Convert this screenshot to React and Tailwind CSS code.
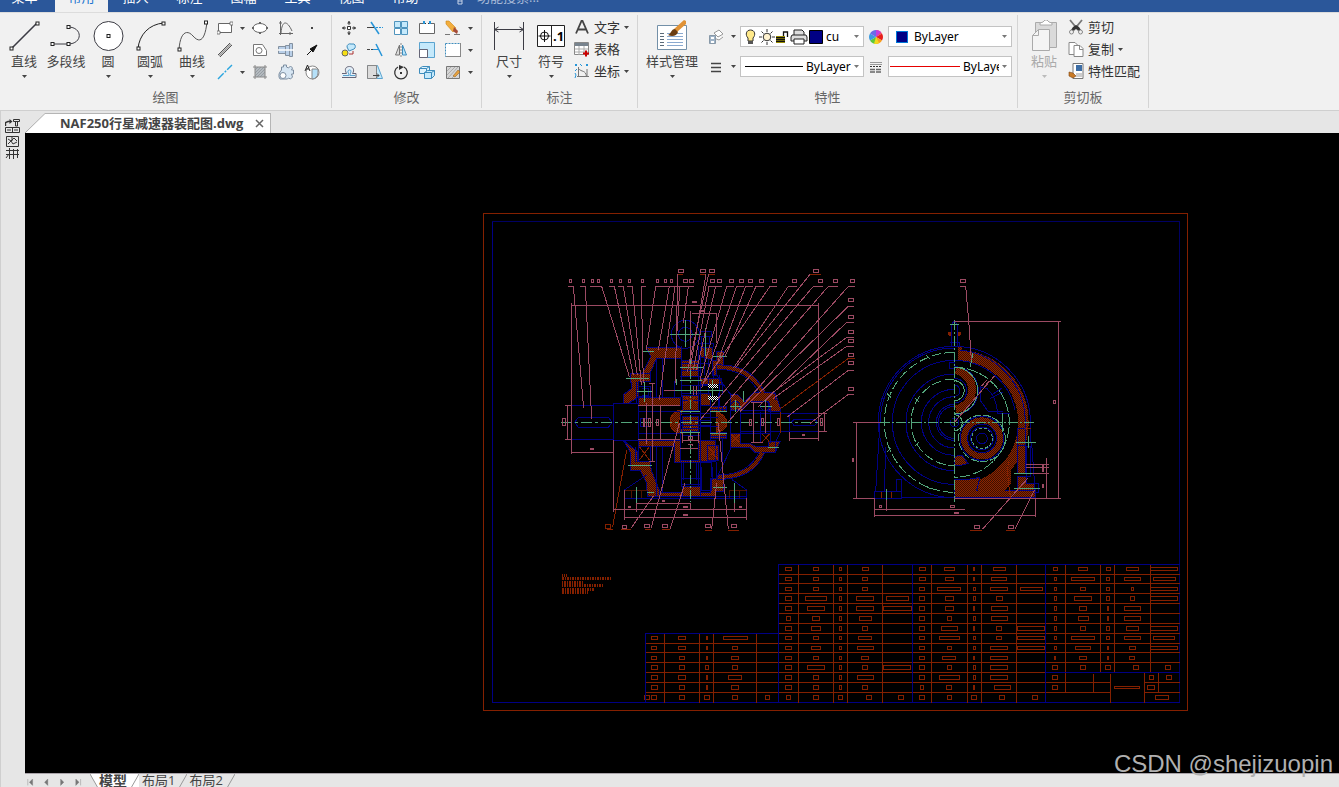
import { useState } from "react";

const BLUE = "#000084";
const BROWN = "#842000";
const PINK = "#9c4a63";
const GREEN = "#52a57b";

function Caret({ className = "text-[#444]" }) {
  return (
    <svg width="5" height="3" viewBox="0 0 5 3" className={`shrink-0 ${className}`}>
      <path d="M0 0h5L2.5 3z" fill="currentColor" />
    </svg>
  );
}

function Node({ x, y }) {
  return <rect x={x - 1.5} y={y - 1.5} width="3" height="3" fill="#fff" stroke="#222" />;
}

const bigIcons = {
  line: (
    <>
      <path d="M3 29L29 3" stroke="#3c3c44" strokeWidth="1.6" />
      <Node x={3.5} y={28.5} />
      <Node x={29.5} y={3.5} />
    </>
  ),
  polyline: (
    <>
      <path d="M2 24H18C33 24 33 7 18 7" stroke="#3c3c44" />
      <Node x={2.5} y={24} />
      <Node x={18.5} y={24} />
      <Node x={18.5} y={7} />
    </>
  ),
  circle: (
    <>
      <circle cx="16.5" cy="16" r="14.5" fill="#fff" stroke="#3c3c44" />
      <Node x={16.5} y={16} />
    </>
  ),
  arc: (
    <>
      <path d="M4 29C5 15 15 4 30 3" stroke="#222" />
      <Node x={4.5} y={28.5} />
      <Node x={29.5} y={3.5} />
    </>
  ),
  curve: (
    <>
      <path d="M3 30C4 12 11 9 17 16C24 24 29 20 31 2" stroke="#555" />
      <Node x={3.5} y={29.5} />
      <Node x={30} y={2.5} />
    </>
  ),
  size: (
    <path
      d="M1.5 2v28M30.5 2v28M2 9.5h28M5.5 7l-4 2.500 4 2.500M26.500 7l4 2.500-4 2.500"
      stroke="#3c3c44"
    />
  ),
  symbol: (
    <>
      <path d="M2.500 5.500h27v21h-27zM16.500 5.500v21" fill="#fff" stroke="#222" />
      <circle cx="9.500" cy="16" r="4" stroke="#111" />
      <path d="M3.500 16h12M9.500 10v12" stroke="#111" />
      <text x="18" y="21" fontSize="13" fontWeight="700" fill="#000" stroke="none">
        .1
      </text>
    </>
  ),
  style: (
    <>
      <path d="M1.500 5.500h29v24h-29z" fill="#fff" stroke="#7390a8" />
      <path d="M4 13.500h4M4 16.500h4M4 19.500h4M4 22.500h4M4 25.500h4" stroke="#5a6a78" />
      <path d="M11 13.500h16M11 16.500h16M11 19.500h16M11 22.500h16M11 25.500h16" stroke="#8aa9cf" />
      <path d="M18 9L28 0l2 1v3l-9 8z" fill="#e09236" />
      <path d="M12 15c3-1 3-6 7-6l3 3c-1 4-6 5-10 3z" fill="#6b3d12" />
    </>
  ),
  paste: (
    <>
      <path d="M7.500 2.500h21v25h-21z" fill="#dadada" stroke="#aaa" />
      <path d="M12 5V3l3-1 2-2h2l2 2 3 1v2z" fill="#fff" stroke="#aaa" />
      <path d="M4.500 15.500l6-6h11v21h-17zM10.500 9.500v6h-6" fill="#f4f4f4" stroke="#aaa" />
    </>
  ),
};

function BigButton({ icon, label, caret = true, disabled = false, wide = false }) {
  return (
    <button
      type="button"
      disabled={disabled}
      className={`flex flex-col items-center pt-[5px] ${wide ? "w-14" : "w-[42px]"} ${
        disabled ? "text-[#aaa]" : "text-[#444]"
      }`}
    >
      <svg width="32" height="32" viewBox="0 0 32 32" fill="none" aria-hidden="true">
        {bigIcons[icon]}
      </svg>
      <span className="text-[13px] leading-[18px] whitespace-nowrap">{label}</span>
      {caret && (
        <span className="pt-[5px] leading-none">
          <Caret className={`block ${disabled ? "text-[#bbb]" : "text-[#444]"}`} />
        </span>
      )}
    </button>
  );
}

const smallIcons = {
  rect: (
    <>
      <path d="M1.500 3.500h13v9h-13z" fill="#fff" stroke="#666" />
      <path d="M0 11h3v3H0zM13 2h3v3h-3z" fill="#fff" stroke="#666" strokeWidth=".8" />
    </>
  ),
  ellipse: (
    <>
      <ellipse cx="8" cy="8" rx="7" ry="4.500" fill="#fff" stroke="#666" />
      <path d="M7 2h2v2H7zM7 12h2v2H7zM0 7h2v2H0zM14 7h2v2h-2z" fill="#666" />
    </>
  ),
  graph: <path d="M2.500 1v14M1 13.500h14M1 3h3M12 12v3M3 13C4 0 9 0 14 11" stroke="#666" />,
  point: <path d="M7 7h2v2H7z" fill="#444" />,
  parallel: (
    <>
      <path d="M1 13L13 1M3 15L15 3" stroke="#555" />
      <path d="M2 14L14 2" stroke="#999" strokeWidth="1.500" />
    </>
  ),
  region: (
    <>
      <path d="M1.500 2.500h9l4 6v5h-13z" fill="#fff" stroke="#777" />
      <circle cx="7" cy="8.500" r="3" stroke="#777" />
    </>
  ),
  shaft: (
    <>
      <path d="M.5 4.500h7v7h-7zM7.500 3.500h4v10h-4zM11.500 1.500h3v13h-3z" fill="#b9cfe8" stroke="#8391a0" />
      <path d="M0 8h16" stroke="#fff" strokeWidth="1.500" />
    </>
  ),
  arrow: (
    <>
      <path d="M3 13L8 8" stroke="#111" />
      <path d="M13 3L6 7l3 3z" fill="#111" stroke="#111" />
    </>
  ),
  center: <path d="M1 15L15 1" stroke="#2aa5df" strokeWidth="1.400" strokeDasharray="8 1.500 2 1.500" />,
  hatch: (
    <>
      <path d="M3 3h10v10H3z" fill="#b4babf" />
      <path d="M3 6l3-3M3 9l6-6M3 12l9-9M5 13l8-8M8 13l5-5" stroke="#8a9196" strokeWidth=".7" />
      <path d="M1 3h14M1 13h14M3 1v14M13 1v14" stroke="#888" />
    </>
  ),
  gear: (
    <>
      <path
        d="M3.500 6V3h2V1h3v2l2 1 2-2 2 2-1 2h2v4l-2 0 1 3-2 2-2-1-1 1H5l-3 0-1-2v-3l1-2z"
        fill="#d7e6f3"
        stroke="#7d8ea1"
      />
      <circle cx="5" cy="11.500" r="3" fill="#fff" stroke="#7d8ea1" />
    </>
  ),
  detail: (
    <>
      <circle cx="8.500" cy="8.500" r="6.500" fill="#fff" stroke="#888" />
      <path d="M8 5h6v4a6 6 0 0 1-6 6z" fill="#b5e0f8" stroke="#888" />
      <path d="M1 7L3.500 1 6 7M2 5h3" stroke="#222" />
    </>
  ),
  move: (
    <>
      <path d="M6.500 6.500h3v3h-3z" fill="#fff" stroke="#333" />
      <path d="M8 1v4M8 11v4M1 8h4M11 8h4" stroke="#444" />
      <path d="M6 3.500L8 1l2 2.500zM6 12.500L8 15l2-2.500zM3.500 6L1 8l2.500 2zM12.500 6L15 8l-2.500 2z" fill="#444" />
    </>
  ),
  trim: (
    <>
      <path d="M4 2l8 12" stroke="#2795d8" strokeWidth="1.500" />
      <path d="M0 7.500h7" stroke="#444" />
      <path d="M9 7.500h7" stroke="#2795d8" strokeDasharray="2 1" />
    </>
  ),
  array: (
    <>
      <path d="M1.500 1.500h6v6h-6zM8.500 1.500h6v6h-6zM8.500 8.500h6v6h-6z" fill="#c5e9fb" stroke="#4f94bd" />
      <path d="M1.500 8.500h6v6h-6z" fill="#fff" stroke="#4f94bd" />
    </>
  ),
  breakIt: (
    <>
      <path d="M4 3.500H.5v10h15v-10H12" fill="#fff" stroke="#666" />
      <path d="M4 2.500h2M10 2.500h2" stroke="#2795d8" strokeWidth="3" />
      <path d="M6 3.500h1M9 3.500h1" stroke="#333" />
    </>
  ),
  erase: (
    <>
      <path d="M1 1l3 0 7 7-3 4-7-8z" fill="#f3ae3d" stroke="#c98419" strokeWidth=".6" />
      <path d="M9 7l4 4-1 3-4-3z" fill="#a54c38" />
      <path d="M0 14.500h5M9 14.500h6" stroke="#777" />
    </>
  ),
  copy: (
    <>
      <circle cx="4" cy="11" r="3" fill="#f6df13" stroke="#666" />
      <path d="M6 5a3 3 0 0 1 4-3l3 0a3 3 0 0 1 0 5l-5 2z" fill="#c5e9fb" stroke="#3e8dbd" />
      <path d="M8 12h4V9" stroke="#a33" />
    </>
  ),
  extend: (
    <>
      <path d="M9 2l6 12" stroke="#2795d8" strokeWidth="1.500" />
      <path d="M0 7.500h6" stroke="#444" strokeDasharray="3 1" />
      <path d="M6 7.500h5" stroke="#2795d8" />
    </>
  ),
  mirror: (
    <>
      <path d="M6.500 3v10h-4z" fill="#ddd" stroke="#777" />
      <path d="M9.500 3v10h4z" fill="#b9e3fa" stroke="#3e8dbd" />
      <path d="M8 1v14" stroke="#888" strokeDasharray="2 1" />
    </>
  ),
  scale: (
    <>
      <path d="M.5 .5h15v15H.5z" fill="#c5e9fb" stroke="#5aa3cf" />
      <path d="M.5 7.500h8v8h-8z" fill="#fff" stroke="#667" />
    </>
  ),
  stretch: (
    <>
      <path d="M.5 1.500h15v13H.5z" fill="#fff" stroke="#3e8dbd" strokeDasharray="2 1" />
      <path d="M15.500 1v14M1 14.500h14" stroke="#888" />
    </>
  ),
  offset: (
    <>
      <path d="M1 9.500h4.500C3 5 5 2.500 8.500 2.500S14 6 11.500 9.500H15V13.500H1" fill="#e4eff8" stroke="#667" />
      <path d="M2 11.500h6c0-2-1.500-3-1-4.500s3-1.500 3 0-1 2.500-1 4.500h5" stroke="#5aa3cf" />
    </>
  ),
  taper: (
    <>
      <path d="M.5 1.500h10l5 13H.5z" fill="#c5e9fb" stroke="#5aa3cf" />
      <path d="M.5 1.500h9v13h-9z" fill="#dcdcdc" stroke="#888" />
      <path d="M6 11.500h6M10 9.500l2 2-2 2" stroke="#444" />
    </>
  ),
  rotate: (
    <>
      <path d="M5 3a6.300 6.300 0 1 0 6 0" stroke="#333" strokeWidth="1.300" />
      <path d="M6 1l5 2-5 3z" fill="#333" />
      <path d="M7 8h2v2H7z" fill="#333" />
    </>
  ),
  blocks: (
    <>
      <path d="M.5 4.500l3-2h7v4l-3 3h-7z" fill="#dff2fc" stroke="#3e8dbd" />
      <path d="M.5 4.500h7l3-2M7.500 4.500v5" stroke="#3e8dbd" />
      <path d="M5.500 8.500l3-2h7v5l-3 3h-7z" fill="#c5e9fb" stroke="#3e8dbd" />
      <path d="M5.500 8.500h7v6M12.500 8.500l3-2" stroke="#3e8dbd" />
    </>
  ),
  hatchEdit: (
    <>
      <path d="M1.500 2.500h13v12h-13z" fill="#d6d6d6" stroke="#777" />
      <path d="M2 7l4-4M2 11l8-8M3 14L13 3M7 14l7-7" stroke="#999" strokeWidth=".7" />
      <path d="M8 12l5-6 2 2-5 5z" fill="#e5a03e" stroke="#8b5a1d" strokeWidth=".5" />
    </>
  ),
  letter: <path d="M2 14.500L7.500 2h1L14 14.500M4 10.500h8" stroke="#444" strokeWidth="1.800" />,
  table: (
    <>
      <path d="M.5 1.500h14v12H.5z" fill="#fff" stroke="#888" />
      <path d="M1 2h13v3H1z" fill="#77838e" />
      <path d="M1 8h13M1 11h13M5 5v9M10 5v9" stroke="#aaa" />
      <path d="M9 12.500h6M12 9.500v6" stroke="#c00" strokeWidth="2" />
    </>
  ),
  coord: (
    <>
      <path d="M4.500 4v10M3 13.500h12M4.500 5.500c3 4 7 1 8 8M13 6v8" stroke="#777" />
      <path d="M1 1l2 2M3 1L1 3M6 1l2 2M12 1l2 2M14 1l-2 2M1 10l1 2M2 12l-1 3M3 6L1 8" stroke="#2795d8" />
    </>
  ),
  layers: (
    <>
      <path d="M6 4l5-3 4 4-5 3zM7 7l-1 2 5 2 4-3" fill="#fff" stroke="#999" />
      <path d="M1.500 6.500h6v8h-6z" fill="#9fb3c7" stroke="#8899a8" />
      <path d="M3 8h3v2H3zM3 12h3v2H3z" fill="#fff" />
    </>
  ),
  lines: <path d="M3 4.500h10M3 8.500h10M3 12.500h10" stroke="#444" strokeWidth="1.300" />,
  wheel: (
    <>
      <path d="M8 8V1a7 7 0 0 1 6 3.500z" fill="#f0486b" />
      <path d="M8 8l6-3.500a7 7 0 0 1 0 7z" fill="#e8201c" />
      <path d="M8 8l6 3.500A7 7 0 0 1 8 15z" fill="#f9a01e" />
      <path d="M8 8v7a7 7 0 0 1-6-3.500z" fill="#5cc93c" />
      <path d="M8 8l-6 3.500a7 7 0 0 1 0-7z" fill="#3c9be0" />
      <path d="M8 8L2 4.500A7 7 0 0 1 8 1z" fill="#6a6be8" />
      <path d="M8 8V1a7 7 0 0 1 5 2z" fill="#c43de0" />
      <path d="M8 8l3 6a7 7 0 0 1-5 .7z" fill="#f2d91e" />
    </>
  ),
  weights: (
    <>
      <path d="M2 3.500h12M2 5.500h12" stroke="#999" />
      <path d="M2 7.500h12" stroke="#333" strokeDasharray="2 1" />
      <path d="M2 10.500h12M2 13h12" stroke="#666" strokeWidth="1.500" strokeDasharray="5 1" />
    </>
  ),
  cut: (
    <>
      <path d="M2 1l9 11M14 1L5 12" stroke="#777" strokeWidth="1.800" />
      <path d="M5 8l3-2 3 2 2 3-3 0-2-1-2 1-3 0z" fill="#333" />
      <circle cx="3.500" cy="13" r="2" stroke="#888" />
      <circle cx="12.500" cy="13" r="2" stroke="#888" />
    </>
  ),
  pages: (
    <>
      <path d="M1 1.500h6l3 3v9H1z" fill="#fff" stroke="#888" />
      <path d="M6 4.500h6l3 3v8H6z" fill="#fff" stroke="#888" />
      <path d="M11.500 4.500v4H15" stroke="#888" />
    </>
  ),
  match: (
    <>
      <path d="M5 .5h10v15H5z" fill="#fff" stroke="#777" />
      <path d="M8 2h6v6H8z" fill="#3c6da5" />
      <path d="M8 11h6M8 13h6" stroke="#999" />
      <path d="M1 9l4 1 3 3-3 2-4-2z" fill="#c87a26" stroke="#7c4310" strokeWidth=".6" />
    </>
  ),
};

function Icon({ name }) {
  return (
    <svg width="16" height="16" viewBox="0 0 16 16" fill="none" aria-hidden="true" className="shrink-0">
      {smallIcons[name]}
    </svg>
  );
}

function ToolButton({ icon, label, caret = false }) {
  return (
    <button type="button" aria-label={label} className="flex h-[22px] items-center gap-[7px] pl-1">
      <Icon name={icon} />
      {caret && <Caret />}
    </button>
  );
}

function TextButton({ icon, label, caret = false }) {
  return (
    <button type="button" className="flex h-[22px] items-center gap-1 text-[13px] text-[#333]">
      <Icon name={icon} />
      <span className="leading-5">{label}</span>
      {caret && <Caret />}
    </button>
  );
}

function Group({ title, children, className = "" }) {
  return (
    <section className="my-[2px] flex shrink-0 flex-col border-r border-[#d4d4d4]">
      <div className={`flex h-[72px] ${className}`}>{children}</div>
      <h2 className="text-center text-[13px] leading-5 text-[#666]">{title}</h2>
    </section>
  );
}

function Picker({ label, value, children, tight = false }) {
  return (
    <label
      className={`flex h-[21px] w-[124px] items-center gap-[3px] border border-[#c3c3c3] bg-white pr-1 ${
        tight ? "pl-px" : "pl-1"
      }`}
    >
      {children}
      <select
        aria-label={label}
        defaultValue={value}
        className="min-w-0 flex-1 appearance-none bg-transparent font-['Noto_Sans',sans-serif] text-[12px] leading-4 text-black outline-none"
      >
        <option>{value}</option>
      </select>
      <Caret className="text-[#777]" />
    </label>
  );
}

const drawTools = [
  ["rect", "矩形", true],
  ["ellipse", "椭圆"],
  ["graph", "公式曲线"],
  ["point", "点"],
  ["parallel", "平行线"],
  ["region", "局部放大"],
  ["shaft", "孔/轴"],
  ["arrow", "箭头"],
  ["center", "中心线", true],
  ["hatch", "剖面线"],
  ["gear", "齿形"],
  ["detail", "放大图"],
];

const modifyTools = [
  ["move", "平移"],
  ["trim", "裁剪"],
  ["array", "阵列"],
  ["breakIt", "打断"],
  ["erase", "删除", true],
  ["copy", "平移复制"],
  ["extend", "延伸"],
  ["mirror", "镜像"],
  ["scale", "缩放"],
  ["stretch", "拉伸", true],
  ["offset", "等距线"],
  ["taper", "过渡"],
  ["rotate", "旋转"],
  ["blocks", "分解"],
  ["hatchEdit", "填充编辑", true],
];

function Ribbon() {
  return (
    <div className="flex h-[99px] shrink-0 overflow-hidden border-t border-b border-t-[#dcdcdc] border-b-[#cfcfcf] bg-[#f1f1f1]">
      <Group title="绘图" className="pr-[5px] pl-[3px]">
        <BigButton icon="line" label="直线" />
        <BigButton icon="polyline" label="多段线" caret={false} />
        <BigButton icon="circle" label="圆" />
        <BigButton icon="arc" label="圆弧" />
        <BigButton icon="curve" label="曲线" />
        <div className="grid auto-rows-[22px] grid-cols-[35px_26px_26px_26px] pt-0.5">
          {drawTools.map(([icon, label, caret]) => (
            <ToolButton key={icon} icon={icon} label={label} caret={caret} />
          ))}
        </div>
      </Group>

      <Group title="修改" className="pl-[5px]">
        <div className="grid auto-rows-[22px] grid-cols-[26px_26px_26px_26px_40px] pt-0.5">
          {modifyTools.map(([icon, label, caret]) => (
            <ToolButton key={icon} icon={icon} label={label} caret={caret} />
          ))}
        </div>
      </Group>

      <Group title="标注" className="pr-2 pl-1.5">
        <BigButton icon="size" label="尺寸" />
        <BigButton icon="symbol" label="符号" />
        <div className="flex flex-col pt-px pl-0.5">
          <TextButton icon="letter" label="文字" caret />
          <TextButton icon="table" label="表格" />
          <TextButton icon="coord" label="坐标" caret />
        </div>
      </Group>

      <Group title="特性" className="pr-[5px] pl-1.5">
        <BigButton icon="style" label="样式管理" wide />
        <div className="grid auto-rows-[21px] grid-cols-[36px_124px_24px_124px] items-center gap-y-[9px] pt-[11px] pl-1">
          <ToolButton icon="layers" label="图层" caret />
          <Picker label="当前图层" value="cu">
            <svg width="78" height="16" viewBox="0 0 78 16" fill="none" className="shrink-0" aria-hidden="true">
              <path d="M3 9C0 6 1 1 5.500 1S11 6 8 9v3H3z" fill="#ffe98a" stroke="#333" />
              <path d="M3 12h5v3H3z" fill="#555" />
              <circle cx="22" cy="8" r="3.800" fill="#fff3d0" stroke="#333" />
              <path d="M22 0v3M22 13v3M14 8h3M27 8h3M16.500 2.500l2 2M25.500 11.500l2 2M16.500 13.500l2-2M25.500 4.500l2-2" stroke="#333" />
              <path d="M31 7h9v7h-9z" fill="#c9b900" />
              <path d="M31 8.500h9M31 10.500h9M31 12.500h9M38.500 7V3h4v5" stroke="#111" strokeWidth="1.300" />
              <path d="M49 6V1h8l2 2v3M47 6h14l1 2v4H46V8z" fill="#ddd" stroke="#222" />
              <path d="M49 10h10v5H49z" fill="#fff" stroke="#222" />
              <path d="M64.500 1.500h13v13h-13z" fill="#000084" stroke="#000" />
            </svg>
          </Picker>
          <span className="flex justify-center">
            <Icon name="wheel" />
          </span>
          <Picker label="颜色" value="ByLayer">
            <span className="mx-[3px] h-3 w-3 shrink-0 border border-[#0078d7] bg-[#000084]" />
          </Picker>
          <ToolButton icon="lines" label="线型" caret />
          <Picker label="线型选择" value="ByLayer">
            <span className="h-px w-[58px] shrink-0 bg-black" />
          </Picker>
          <span className="flex justify-center">
            <Icon name="weights" />
          </span>
          <Picker label="线宽选择" value="ByLayer" tight>
            <span className="h-px w-[70px] shrink-0 bg-[#e60000]" />
          </Picker>
        </div>
      </Group>

      <Group title="剪切板" className="pr-2 pl-[5px]">
        <BigButton icon="paste" label="粘贴" disabled />
        <div className="flex flex-col pt-px pl-[3px]">
          <TextButton icon="cut" label="剪切" />
          <TextButton icon="pages" label="复制" caret />
          <TextButton icon="match" label="特性匹配" />
        </div>
      </Group>
    </div>
  );
}

function MenuBar() {
  const [active, setActive] = useState("常用");
  const items = ["常用", "插入", "标注", "图幅", "工具", "视图", "帮助"];
  return (
    <nav className="flex h-3 shrink-0 items-end overflow-hidden bg-[#2b579a] text-[13px] text-white">
      <button type="button" className="h-7 w-[55px] shrink-0 pr-1.5 pb-0.5 leading-5">
        菜单
      </button>
      {items.map((item) => (
        <button
          key={item}
          type="button"
          onClick={() => setActive(item)}
          className={`mr-px h-7 w-[53px] shrink-0 pb-0.5 leading-5 ${
            item === active ? "bg-[#f1f1f1] text-[#1a73d0]" : ""
          }`}
        >
          {item}
        </button>
      ))}
      <label className="flex h-7 items-center gap-3 pb-0.5 pl-[22px]">
        <svg width="10" height="16" viewBox="0 0 10 16" fill="none" aria-hidden="true">
          <path d="M3 10C0 7 1 2 5 2s5 5 2 8v5H3zM3 12h4" stroke="#c8d4e8" />
        </svg>
        <input
          type="text"
          aria-label="功能搜索"
          placeholder="功能搜索..."
          className="w-24 bg-transparent leading-5 outline-none placeholder:text-[#a9bbd8]"
        />
      </label>
    </nav>
  );
}

const rowY = [569, 579, 589, 598, 608, 618, 628, 638, 648, 658, 667, 677, 687, 697];
const rowLines = [574, 583, 593, 603, 613, 623, 633, 643, 652, 662];

// centre of the column, first row, widths of the text boxes
const partColumns = [
  [654, 7, [7, 6, 6, 7, 7, 7, 6]],
  [682, 7, [8, 8, 6, 6, 8, 6, 6]],
  [707, 7, [2, 2, 2, 4, 2, 2, 6]],
  [735, 7, [25, 6, 8, 6, 14, 8, 6]],
  [767, 13, [5]],
  [647, 13, [6]],
  [788, 0, [7, 7, 7, 7, 7, 5, 7, 7, 7, 7, 7, 7, 7, 5]],
  [816, 0, [6, 6, 6, 22, 18, 8, 10, 6, 10, 6, 18, 6, 6, 6]],
  [840, 0, [3, 3, 3, 3, 3, 3, 3, 3, 3, 3, 3, 3, 3, 5]],
  [865, 0, [7, 6, 6, 18, 18, 13, 6, 14, 17, 8, 6, 17, 6]],
  [869, 13, [6]],
  [897, 0, [0, 0, 0, 23, 29, 0, 0, 0, 0, 0, 28]],
  [901, 13, [6]],
  [922, 0, [7, 7, 6, 6, 6, 6, 6, 6, 6, 6, 6, 6, 4, 6]],
  [949, 0, [11, 9, 24, 9, 9, 5, 17, 21, 5, 14, 5, 21, 6, 5]],
  [974, 0, [2, 2, 3, 3, 2, 3, 2, 3, 3, 2, 3, 3, 2, 6]],
  [999, 0, [13, 16, 18, 7, 17, 17, 6, 6, 18, 18, 18, 18, 0, 0]],
  [1002, 12, [17, 6]],
  [1031, 0, [0, 0, 23, 0, 0, 0, 28, 28, 28]],
  [1035, 13, [6]],
  [1055, 0, [5, 3, 3, 3, 3, 3, 3, 3, 3, 2, 6, 6, 6]],
  [1083, 0, [10, 24, 6, 18, 8, 11, 6, 24, 16, 8, 6]],
  [1108, 0, [5, 4, 4, 4, 2, 2, 4, 4, 2, 2, 6]],
  [1132, 0, [13, 17, 3, 5, 17, 17, 13, 17, 7, 6]],
  [1136, 10, [6]],
  [1164, 0, [28, 23, 28, 28, 0, 0, 28, 22, 28]],
  [1168, 10, [6]],
];

function PartsList() {
  return (
    <g transform="translate(.5 .5)">
      <g stroke={BROWN}>
        {rowLines.map((y) => (
          <path key={y} d={`M${y > 633 ? 645 : 778} ${y}H1179`} />
        ))}
        <path d="M645 672H1045M645 682H1110M645 692H1110M1144 682H1179M1144 692H1179" />
        <path d="M664 633V702M699 633V702M713 633V702M756 633V702" />
        <path d="M798 564V702M833 564V702M847 564V702M882 564V702" />
        <path d="M931 564V702M967 564V702M981 564V702M1016 564V702" />
        <path d="M1065 564V692M1100 564V672M1114 564V672M1150 564V672" />
        <path d="M1093 673V692M1110 673V702M1144 672V702M1158 672V692" />
        {partColumns.map(([cx, first, widths]) =>
          widths.map((w, i) =>
            w ? (
              <rect
                key={`${cx}-${i}`}
                x={cx - Math.floor(w / 2)}
                y={rowY[first + i] - 2}
                width={w - 1}
                height={first + i > 2 && first + i < 7 ? 4 : first + i > 9 ? 4 : 3}
              />
            ) : null
          )
        )}
        <path d="M1149 675h4v4h-4zM1166 675h5v4h-5zM1147 685h7v4h-7zM1155 695h13v4h-13zM1114 686h25v2h-25z" />
      </g>
      <path
        d="M778 702V564H1179M645 702V633H778M912 564V702M1045 564V702M1045 672H1179"
        stroke={BLUE}
      />
    </g>
  );
}

const topTags = [
  62, 100, 127, 145, 184, 211, 238, 277, 322, 345, 363, 406, 424, 487, 508, 544, 574, 601, 633, 673,
  732, 810, 855, 906,
];
const sideTags = [120, 171, 216, 243, 285, 309, 387];

// Longitudinal section, drawn in thirds of a canvas unit
function SectionView() {
  return (
    <g transform="translate(550 260) scale(.3333333333)" strokeWidth="3">
      <g fill="url(#hatch)" stroke={BLUE}>
        <path d="M288 262H395V295H320L298 345H275L302 290Z" />
        <path d="M240 340H300V365H265V412L235 430H220V404L245 385Z" />
        <path d="M265 412H390V435H265ZM265 540H390V560H265Z" />
        <path d="M220 541L262 575V605H300L304 630L328 690V708H292L290 670L270 630H240V575Z" />
        <path d="M328 698H395V708H328ZM395 300H445V350H395ZM397 405H445V450H397ZM398 470H445V515H398Z" />
        <path d="M373 540H390V600H445V540H480V606H373ZM397 680H450V708H397Z" />
        <path d="M398 450C350 450 345 520 398 520L385 487Z" stroke={BROWN} />
        <path d="M450 262H488V300H500V275H520V315H498V345H486V300L450 290Z" />
        <path d="M450 355H515V372H450ZM450 400H480V437H450ZM480 440H528V455H480ZM480 517H528V535H480Z" />
        <path d="M500 455C540 470 540 510 500 517Z" stroke={BROWN} />
        <path d="M540 402H560L585 425L610 398H675L690 440V455H655V425H600L575 450H540Z" />
        <path d="M540 520H570V550H600L620 560H655V545H690L675 578H615L600 562H540Z" />
        <path d="M450 540H495V605H450ZM450 698H480V655H520V695H495V708H450ZM472 555H505V600H472Z" />
      </g>
      <g fill="none" stroke="url(#hatch)" strokeWidth="14">
        <path d="M500 320Q600 318 640 398M500 652Q610 652 636 578" />
      </g>
      <g fill="none" stroke={BLUE}>
        <path d="M65 436H190V538H65ZM190 430H265V541H190ZM85 472H175L186 487L175 502H85L74 487Z" />
        <path d="M318 300V410M338 295V410M318 560V708M338 560V695M265 365V541M258 365V430M256 560V605" />
        <path d="M395 258V410M445 258V410M395 605V680M445 605V680M400 610V660M440 610V660" />
        <circle cx="406" cy="223" r="42" />
        <circle cx="406" cy="223" r="21" />
        <path d="M450 215H485V230H450M455 230V258M478 230V258M445 250H490V262" />
        <path d="M500 315Q606 310 645 400M500 658Q612 660 645 575M500 328Q590 326 628 400M500 645Q596 646 628 575" />
        <path d="M265 455H390M265 520H390M270 475H300V500H270ZM390 480H480M390 495H480M390 460H480M390 450V605" />
        <path d="M540 450H660M540 520H660M540 455V570M571 455V520M631 455V550M660 440V550M571 515H631M571 460H718V515H631" />
        <path d="M718 460H805V515H718ZM732 478H795L802 487L795 496H732L724 487Z" />
        <path d="M540 400V455M500 345L540 402M500 655L540 570M498 605V655M488 620V660M452 550V690" />
        <path d="M223 690L290 645M223 690V715H590V690L545 658M265 380H300V410H265M275 385H295V405H275M265 560H300V603H265Z" />
        <path d="M300 708H590M390 362H450M390 350H450M373 362V412H390M395 655H450M395 672H450" />
        <path d="M395 310H480M395 330H450M395 376H475M452 290V540M462 262V345M474 300V405M482 400V540M395 400H480M395 420H450M490 330V355M508 345V440M516 372V405" />
        <path d="M450 473H505M450 500H505M480 448H530M480 528H530M505 400V455M516 437V455M516 535V655M484 605V650M455 620V690H484V655M398 505H450M398 525H450" />
        <circle cx="556" cy="438" r="14" />
        <circle cx="646" cy="438" r="14" />
        <path d="M663 400H675V420M690 450V520L675 550V578" />
      </g>
      <g fill="none" stroke={BROWN}>
        <path d="M398 408L445 430M398 430L445 408M268 560L298 600M298 560L268 600M475 560L503 598M503 560L475 598" />
        <path d="M545 522L568 545M568 522L545 545M637 522L658 545M658 522L637 545M690 455V520" />
        <path d="M225 690H300M245 690V713M274 690V713M540 690H590M538 690V713M568 690V713" opacity=".6" />
        <path d="M895 295L690 447M188 800L230 570M895 295H914M382 43H399M450 43H465M475 43H495M780 43H812" />
        <path d="M172 808H189M213 808H243M285 808H303M335 808H360M465 811H485M535 811H567" />
        <path d="M166 793H182V805H166Z" />
      </g>
      <g fill="none" stroke={GREEN}>
        <path d="M33 487H820" strokeDasharray="33 9 9 9" />
        <path d="M421 240V725" strokeDasharray="27 6 6 6" />
        <path d="M360 223H452M406 180V262M228 355H298M262 394H308M283 365V425M234 616H306M259 682V730M280 273H312" />
        <path d="M390 322H462M390 360H455M375 391H520M487 360V425M466 205V288M390 454H450M390 517H450" />
        <path d="M480 455H530M480 520H530M490 289H530M490 682H530M540 438H575M556 420V455M630 438H665M646 420V455" />
        <path d="M580 393V425M553 668V740M655 562H687M290 697H312M380 358V375" />
      </g>
      <g fill="none" stroke={PINK}>
        <path d="M65 130V583M65 136H805M805 130V542M65 577H190M190 541V757M45 436H67M45 538H67M53 436V538" />
        <path d="M190 748H590M223 690V780M223 772H590M259 730V757M259 730H421V748M590 715V780M553 730V757" />
        <path d="M421 152V300M425 160H499V250M805 460H830M805 515H830M824 460V515M718 515V542M718 535H805" />
        <path d="M265 436H390M265 538H390M289 430V552M307 370V604M331 436V538M298 370H315M298 604H315M397 548V518M445 548V518M397 541H445M390 565H445" />
        <path d="M610 427V547M645 427V520M603 427H640M603 547H640M342 391H375M430 378V405M439 378V405" />
        <path d="M38 475H47V496H38ZM295 475H302V499H295ZM319 478H326V496H319ZM279 475H284V499H279ZM598 478H605V496H598ZM634 475H641V496H634ZM682 475H689V496H682ZM811 475H818V496H811Z" />
        <path d="M120 567h11M234 741h9M336 722h9M400 741h13M400 765h13M427 126h13M757 525h9M567 741h9M450 153h12" strokeWidth="6" />
        <path d="M415 530H426V537H415ZM415 552H426V558" />
        <path d="M70 79L101 445M106 79L125 478M155 79L238 350M193 79L250 345M220 79L262 345M247 79L274 375M274 79L280 370" />
        <path d="M317 79L289 270M358 79L325 270M375 79L340 330M383 43L376 370M390 79L378 260M415 79L400 190M328 420L340 330" />
        <path d="M468 43L420 330M476 43L412 335M477 79L430 330M497 79L440 330M530 79L450 360M560 79L455 385M587 79L505 300M618 79L525 290" />
        <path d="M660 79L460 370M715 79L550 325M780 43L555 325M790 79L450 480M835 79L520 440M895 79L535 485" />
        <path d="M895 139L570 455M890 187L625 440M890 232L665 400M890 259L670 415M895 331L710 472M895 403L780 490" />
        <path d="M243 805L310 708M303 805L388 490M360 808L405 670M485 808L500 670M535 808L505 490" />
        <path d="M54 79H72M91 79H108M120 79H157M177 79H195M204 79H222M231 79H249M272 79H288M316 79H433M477 79H516M530 79H553M560 79H583M587 79H610M618 79H642M660 79H682M715 79H742M790 79H818M835 79H864M895 79H914" />
        <path d="M895 139H912M890 187H912M890 232H912M890 259H912M895 331H912M895 403H912" />
        {topTags.map((x, i) => (
          <rect key={x} x={x - (i > 10 ? 6 : 3)} y="58" width={i > 10 ? 12 : 6} height="9" />
        ))}
        {sideTags.map((y) => (
          <rect key={y} x="896" y={y - 4} width="14" height="9" />
        ))}
        <path d="M386 28H401V38H386ZM451 28H466V38H451ZM478 28H493V38H478ZM790 28H805V38H790Z" />
        <path d="M217 796H230V805H217ZM283 793H298V803H283ZM337 793H352V803H337ZM466 793H481V803H466ZM544 793H559V803H544Z" />
      </g>
      <path d="M474 372H504V384H474ZM474 408H504V420H474Z" fill="url(#hatchWhite)" />
    </g>
  );
}

// End view, half in section
function EndView() {
  return (
    <g transform="translate(845 270) scale(.3333333333)" strokeWidth="3">
      <g fill="none" stroke="url(#hatch)">
        <path d="M340 256A201 201 0 0 1 328 658" strokeWidth="32" />
        <path d="M332 300A60 60 0 0 1 332 418" strokeWidth="24" />
        <circle cx="411" cy="505" r="54" strokeWidth="18" />
      </g>
      <g fill="url(#hatch)" stroke={BLUE}>
        <path d="M328 630Q370 630 405 622L395 662H572V683H328Z" />
        <path d="M518 475H542V525H518ZM518 525H540V610H518ZM518 618H545V640H568V660H518ZM328 560L350 555L370 580L345 587H328Z" />
        <path d="M340 232H352V262H340ZM470 600L500 575L497 640L480 662H400Z" stroke="none" />
        <circle cx="315" cy="191" r="5" fill={BROWN} stroke={BROWN} />
        <circle cx="342" cy="191" r="5" fill={BROWN} stroke={BROWN} />
      </g>
      <g fill="none" stroke={BLUE}>
        <path d="M328 229A228 228 0 0 0 100 457A228 228 0 0 0 328 683M328 234A222 222 0 0 0 106 457" />
        <path d="M328 271A186 186 0 0 0 328 643M328 312A145 145 0 0 0 328 602M328 358A99 99 0 0 0 328 556M328 380A77 77 0 0 0 328 534" />
        <path d="M328 403A54 54 0 0 0 328 511M328 409A48 48 0 0 0 328 505" />
        <path d="M328 229A228 228 0 0 1 556 457V520M345 240A216 216 0 0 1 541 457V510M328 271A186 186 0 0 1 510 420" />
        <path d="M320 165V229M337 165V229M314 218H343V229M320 165Q328 145 337 165" />
        <path d="M328 290A72 72 0 0 1 328 434M328 325A37 37 0 0 1 328 399M328 345A17 17 0 0 1 328 379" />
        <circle cx="411" cy="505" r="66" />
        <circle cx="411" cy="505" r="43" />
        <circle cx="411" cy="505" r="34" />
        <circle cx="411" cy="505" r="16" />
        <circle cx="328" cy="457" r="13" />
        <path d="M88 664H170V685H88ZM155 664V628H170V664M105 457L92 664M122 530L118 664M170 683H328M572 685V660" />
        <path d="M405 350L425 355Q455 380 458 430H495M405 350V390L430 425H475M440 375L470 355M435 385L475 365" />
        <path d="M545 530H555V620H545ZM568 640H580V668H568M560 520L572 685M328 685H572M313 278H328V294H313Z" />
      </g>
      <g fill="none" stroke={GREEN}>
        <path d="M105 457H568" strokeDasharray="30 6 6 6" />
        <path d="M328 150V695" strokeDasharray="30 6 6 6" />
        <path d="M328 247A210 210 0 0 0 328 667M328 327A130 130 0 0 0 328 587" strokeDasharray="30 9" />
        <path d="M328 292A165 165 0 0 1 493 457A165 165 0 0 1 328 622" strokeDasharray="33 6" />
        <path d="M328 292A70 70 0 0 1 328 432M328 332A30 30 0 0 1 328 392M328 434A23 23 0 0 1 328 482" />
        <circle cx="411" cy="505" r="70" strokeDasharray="24 6" />
        <circle cx="411" cy="505" r="31" strokeDasharray="9 6" />
        <path d="M315 163H343M118 445V468M200 445V468M243 256L254 266M126 370L138 382M210 384L222 396M126 546L138 534M210 528L222 516M244 648L256 658" />
        <path d="M472 430V485M512 517H573M550 498V535M508 610H562M508 655H585M124 657V690M376 290L384 250" />
      </g>
      <g fill="none" stroke={PINK}>
        <path d="M328 154H648M641 154V685M328 685H648M25 457H105M34 457V685M25 685H88M88 685V742M572 685V742" />
        <path d="M88 736H572M88 718H360M124 690V722M543 583H612M543 592H612M560 610H612M604 565V685" />
        <path d="M345 49H362L371 150L379 270M328 457L448 318M410 348L425 330M416 352L432 334" />
        <path d="M412 778L548 625M510 778L568 660" />
        <path d="M346 28H361V38H346ZM625 392H632V401H625ZM102 706H110V712H102ZM316 706H328V712H316ZM388 767H403V776H388ZM490 767H505V776H490Z" />
        <path d="M21 571h6M591 588h6M591 601h6M591 648h6" strokeWidth="12" />
        <path d="M327 729h15" strokeWidth="6" />
      </g>
      <path d="M375 781H412M483 781H510M490 575Q485 620 497 683M540 475H558M109 666V685M139 666V685" stroke={BROWN} fill="none" />
    </g>
  );
}

// Checks of one canvas unit, laid out on an 8 by 8 tile
const checks = [0, 1, 2, 3, 4, 5, 6, 7]
  .map((y) => [0, 2, 4, 6].map((x) => `M${(x + (y % 2)) * 3} ${y * 3}h3v3h-3z`).join(""))
  .join("");

function HatchPattern({ id, color, base }) {
  return (
    <pattern id={id} width="24" height="24" patternUnits="userSpaceOnUse">
      <rect width="24" height="24" fill={base} />
      <path d={checks} fill={color} />
    </pattern>
  );
}

function Drawing() {
  return (
    <svg
      viewBox="25 133 1314 640"
      className="block h-full w-full"
      shapeRendering="crispEdges"
      fill="none"
      role="img"
      aria-label="NAF250行星减速器装配图"
    >
      <defs>
        <HatchPattern id="hatch" color="#8c2400" base="#3c1000" />
        <HatchPattern id="hatchWhite" color="#fff" base="#000" />
      </defs>
      <path d="M483.500 213.500H1187.500V710.500H483.500Z" stroke={BROWN} />
      <path d="M492.500 221.500H1179.500V702.500H492.500Z" stroke="#000063" />
      <path d="M492.500 221.500V702.500H1179.500" stroke={BLUE} />
      <SectionView />
      <EndView />
      <PartsList />
      <g stroke={BROWN} strokeWidth="3">
        <path d="M562 575.500h5" strokeDasharray="1 1" />
        <path d="M562 578.500h50" strokeDasharray="2 1 1 1" />
        <path d="M562 582.500h21M562 585.500h41" strokeDasharray="1 1 2 1" />
        <path d="M562 589.500h33M562 592.500h26" strokeDasharray="2 1 1 1" />
      </g>
    </svg>
  );
}

function SideBar() {
  return (
    <aside className="w-[25px] shrink-0 border-l border-[#cfcfcf] bg-[#e6e6e6] pt-[7px] pl-1">
      <button type="button" aria-label="图库">
        <svg width="15" height="42" viewBox="0 0 15 42" fill="none" stroke="#333" className="block">
          <path d="M.5 8V4.500L3 3.500h3" strokeWidth="1.400" />
          <path d="M4.500 1l3 2.500-3 2.500z" fill="#333" stroke="none" />
          <path d="M8.500 1.500h6v2h-6zM10.500 4v4h2V4M.5 9.500h14v5H.5zM2 12h4M9 12h4M7.500 10v4" />
          <path d="M1.500 18.500h12v10h-12zM3 21l3 2 3-3 3 3M3 26l3-3 2 3 4-2M7 19v4" />
          <path d="M1 32.500h13M4.500 30v11M8.500 31v10M12.500 31v9M1 36.500h13M1 40L4 36" />
        </svg>
      </button>
    </aside>
  );
}

function DocumentTabs() {
  return (
    <div className="flex h-[22px] shrink-0 items-end bg-[#e6e6e6]">
      <svg width="20" height="20" viewBox="0 0 20 20" className="shrink-0" aria-hidden="true">
        <path d="M0 20L20 0V20z" fill="#fff" />
        <path d="M0 20L20 .5" stroke="#aaa" />
      </svg>
      <div className="flex h-5 items-center gap-3 border-t border-r border-[#b5b5b5] bg-white pr-1.5 pl-[15px]">
        <span className="pb-0.5 text-[13px] leading-4 font-bold whitespace-nowrap text-[#444]">
          NAF250行星减速器装配图.dwg
        </span>
        <button type="button" aria-label="关闭">
          <svg width="9" height="9" viewBox="0 0 9 9" className="block">
            <path d="M1 1l7 7M8 1L1 8" stroke="#666" strokeWidth="1.500" />
          </svg>
        </button>
      </div>
    </div>
  );
}

function Slash({ flip = false }) {
  return (
    <svg width="8" height="14" viewBox="0 0 8 14" fill="none" className="shrink-0" aria-hidden="true">
      {flip && <path d="M0 0L8 14V0z" fill="#fff" />}
      <path d={flip ? "M0 0L8 14" : "M8 0L0 14"} stroke="#999" />
    </svg>
  );
}

function LayoutTabs() {
  const arrows = [
    ["首页", "M1 0v8M7 0v8L3 4z"],
    ["上一页", "M6 0v8L2 4z"],
    ["下一页", "M2 0v8l4-4z"],
    ["末页", "M1 0v8l4-4zM7 0v8"],
  ];
  return (
    <div className="flex h-[14px] shrink-0 overflow-hidden border-t border-[#a9a3a9] bg-[#e6e6e6] text-[13px] leading-[13px] text-[#444]">
      <div className="flex items-center gap-2 pt-1 pr-[7px] pl-0.5">
        {arrows.map(([label, d]) => (
          <button key={label} type="button" aria-label={label}>
            <svg width="8" height="8" viewBox="0 0 10 10" className="block">
              <path d={d} fill="#777" stroke="#777" strokeWidth=".5" />
            </svg>
          </button>
        ))}
      </div>
      <Slash flip />
      <button type="button" className="bg-white pl-px text-[14px] leading-[13px] font-bold">
        模型
      </button>
      <span className="flex bg-white pl-1">
        <Slash />
      </span>
      <button type="button" className="pl-[3px]">
        布局1
      </button>
      <span className="flex pl-1">
        <Slash />
      </span>
      <button type="button" className="pl-0.5">
        布局2
      </button>
      <span className="flex pl-1">
        <Slash />
      </span>
    </div>
  );
}

export default function App() {
  return (
    <div className="relative flex h-screen flex-col overflow-hidden bg-[#e6e6e6] font-['Open_Sans','Noto_Sans_CJK_SC',sans-serif]">
      <MenuBar />
      <Ribbon />
      <div className="flex min-h-0 flex-1">
        <SideBar />
        <main className="flex min-w-0 flex-1 flex-col">
          <DocumentTabs />
          <div className="min-h-0 flex-1 bg-black">
            <Drawing />
          </div>
          <LayoutTabs />
        </main>
      </div>
      <p className="absolute right-1.5 bottom-[9px] font-['Liberation_Sans',sans-serif] text-[24px] leading-7 text-[#b0b0b0]">
        CSDN @shejizuopin
      </p>
    </div>
  );
}
